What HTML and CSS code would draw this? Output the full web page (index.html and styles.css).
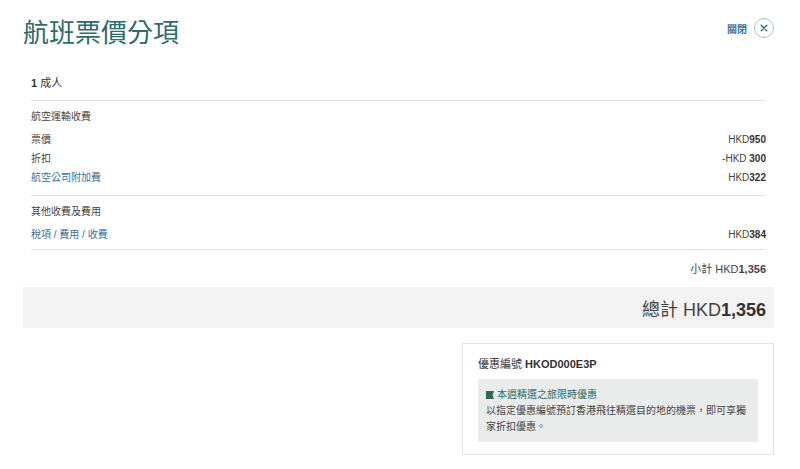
FILE: index.html
```html
<!DOCTYPE html>
<html lang="zh-Hant">
<head>
    <meta charset="UTF-8">
    <meta name="viewport" content="width=device-width, initial-scale=1.0">
    <title>航班票價分項</title>
    <link rel="stylesheet" href="styles.css">
</head>
<body>
    <div class="modal">
        <div class="header">
            <h1>航班票價分項</h1>
            <button class="close">
                <span>關閉</span>
                <span class="close-icon">
                    <svg width="8" height="8" viewBox="0 0 8 8"><path d="M1.2 1.2L6.8 6.8M6.8 1.2L1.2 6.8" stroke="#2f5f8a" stroke-width="1.3" stroke-linecap="round"/></svg>
                </span>
            </button>
        </div>

        <div class="breakdown">
            <div class="pax"><b>1</b> 成人</div>

            <div class="group first">
                <div class="group-title">航空運輸收費</div>
                <div class="row"><span>票價</span><span>HKD<b>950</b></span></div>
                <div class="row"><span>折扣</span><span>-HKD <b>300</b></span></div>
                <div class="row"><a href="#">航空公司附加費</a><span>HKD<b>322</b></span></div>
            </div>

            <div class="group second">
                <div class="group-title">其他收費及費用</div>
                <div class="row"><a href="#">稅項 / 費用 / 收費</a><span>HKD<b>384</b></span></div>
            </div>

            <div class="subtotal">小計 HKD<b>1,356</b></div>
        </div>

        <div class="total"><span>總計 HKD<b>1,356</b></span></div>

        <div class="promo-wrap">
            <div class="promo">
                <div class="promo-code">優惠編號 <b>HKOD000E3P</b></div>
                <div class="promo-body">
                    <div class="promo-title">
                        <svg width="8" height="8" viewBox="0 0 8 8"><path d="M0 0H8L6.6 4L8 8H0Z" fill="#2e6a58"/></svg>
                        <span>本週精選之旅限時優惠</span>
                    </div>
                    <p>以指定優惠編號預訂香港飛往精選目的地的機票，即可享獨家折扣優惠。</p>
                </div>
            </div>
        </div>
    </div>
</body>
</html>
```

FILE: styles.css
```css
body {
    margin: 0;
    background: #fff;
    font-family: 'Liberation Sans', 'Noto Sans CJK TC', sans-serif;
    color: #444;
}
.modal {
    padding: 0 26px 0 23px;
}
.header {
    display: flex;
    justify-content: space-between;
    align-items: center;
    height: 64px;
}
h1 {
    margin: 0 0 4px;
    font-size: 26px;
    font-weight: normal;
    color: #2f6b6b;
    font-family: 'Noto Sans CJK TC', sans-serif;
}
.close {
    display: flex;
    align-items: center;
    gap: 7px;
    border: none;
    background: none;
    padding: 0;
    margin-top: -8px;
    font-family: 'Noto Sans CJK TC', sans-serif;
    font-size: 10px;
    font-weight: bold;
    color: #3f6f9a;
    cursor: pointer;
}
.close-icon {
    display: flex;
    align-items: center;
    justify-content: center;
    width: 18px;
    height: 18px;
    border: 1px solid #a3bfd6;
    border-radius: 50%;
}
.breakdown {
    margin: 0 8px;
    font-size: 10px;
    line-height: 19px;
}
.pax {
    padding: 10px 0 7px;
    border-bottom: 1px solid #e2e2e2;
    font-size: 11px;
    color: #333;
}
.group {
    padding-top: 6px;
    border-bottom: 1px solid #e2e2e2;
}
.group.first {
    padding-bottom: 8px;
}
.group.second {
    padding-bottom: 5px;
}
.group-title {
    margin-bottom: 4px;
    color: #444;
}
.row {
    display: flex;
    justify-content: space-between;
}
.row b {
    color: #333;
}
a {
    color: #3a6e9c;
    text-decoration: none;
}
.subtotal {
    padding-top: 10px;
    text-align: right;
    font-size: 11px;
    color: #444;
}
.total {
    margin-top: 8px;
    height: 41px;
    padding-right: 8px;
    background: #f3f3f3;
    display: flex;
    align-items: center;
    justify-content: flex-end;
    font-size: 18px;
    color: #444;
}
.total b {
    color: #333;
}
.promo-wrap {
    display: flex;
    justify-content: flex-end;
    margin-top: 15px;
}
.promo {
    width: 280px;
    padding: 12px 15px;
    border: 1px solid #e3e3e3;
}
.promo-code {
    font-size: 11px;
    line-height: 16px;
    color: #333;
}
.promo-body {
    margin-top: 7px;
    padding: 8px 8px 7px;
    background: #eaeceb;
    font-size: 10px;
    line-height: 16px;
}
.promo-title {
    display: flex;
    align-items: center;
    gap: 3px;
    color: #2e6a62;
}
.promo-body p {
    margin: 0;
    color: #444;
}
```
